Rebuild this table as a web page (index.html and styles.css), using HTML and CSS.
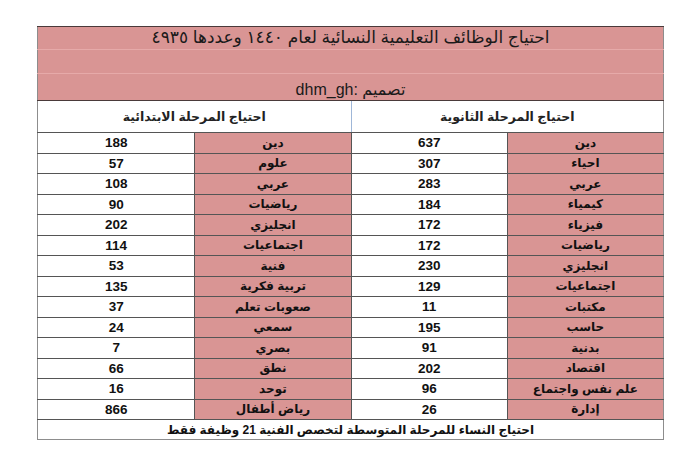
FILE: index.html
```html
<!DOCTYPE html>
<html lang="ar">
<head>
<meta charset="utf-8">
<link rel="stylesheet" href="styles.css">
</head>
<body>
<div class="sheet">
  <table class="grid" dir="rtl">
    <colgroup>
      <col class="c1"><col class="c2"><col class="c3"><col class="c4">
    </colgroup>
    <thead>
      <tr class="h-title"><th colspan="4">احتياج الوظائف التعليمية النسائية لعام ١٤٤٠ وعددها ٤٩٣٥</th></tr>
      <tr class="h-empty"><th colspan="4"></th></tr>
      <tr class="h-credit"><th colspan="4">تصميم :dhm_gh</th></tr>
      <tr class="h-sub">
        <th colspan="2" class="sub-right">احتياج المرحلة الثانوية</th>
        <th colspan="2" class="sub-left">احتياج المرحلة الابتدائية</th>
      </tr>
    </thead>
    <tbody>
      <tr><td class="subj">دين</td><td class="num">637</td><td class="subj">دين</td><td class="num">188</td></tr>
      <tr><td class="subj">احياء</td><td class="num">307</td><td class="subj">علوم</td><td class="num">57</td></tr>
      <tr><td class="subj">عربي</td><td class="num">283</td><td class="subj">عربي</td><td class="num">108</td></tr>
      <tr><td class="subj">كيمياء</td><td class="num">184</td><td class="subj">رياضيات</td><td class="num">90</td></tr>
      <tr><td class="subj">فيزياء</td><td class="num">172</td><td class="subj">انجليزي</td><td class="num">202</td></tr>
      <tr><td class="subj">رياضيات</td><td class="num">172</td><td class="subj">اجتماعيات</td><td class="num">114</td></tr>
      <tr><td class="subj">انجليزي</td><td class="num">230</td><td class="subj">فنية</td><td class="num">53</td></tr>
      <tr><td class="subj">اجتماعيات</td><td class="num">129</td><td class="subj">تربية فكرية</td><td class="num">135</td></tr>
      <tr><td class="subj">مكتبات</td><td class="num">11</td><td class="subj">صعوبات تعلم</td><td class="num">37</td></tr>
      <tr><td class="subj">حاسب</td><td class="num">195</td><td class="subj">سمعي</td><td class="num">24</td></tr>
      <tr><td class="subj">بدنية</td><td class="num">91</td><td class="subj">بصري</td><td class="num">7</td></tr>
      <tr><td class="subj">اقتصاد</td><td class="num">202</td><td class="subj">نطق</td><td class="num">66</td></tr>
      <tr><td class="subj">علم نفس واجتماع</td><td class="num">96</td><td class="subj">توحد</td><td class="num">16</td></tr>
      <tr><td class="subj">إدارة</td><td class="num">26</td><td class="subj">رياض أطفال</td><td class="num">866</td></tr>
    </tbody>
    <tfoot>
      <tr class="foot"><td colspan="4">احتياج النساء للمرحلة المتوسطة لتخصص الفنية 21 وظيفة فقط</td></tr>
    </tfoot>
  </table>
</div>
</body>
</html>
```
FILE: styles.css
```css
html, body {
  margin: 0;
  padding: 0;
  background: #ffffff;
}
body {
  font-family: "Liberation Sans", "DejaVu Sans", Arial, sans-serif;
  color: #111;
}
.sheet {
  padding: 26px 0 0 37px;
}
.grid {
  border-collapse: collapse;
  width: 627px;
  table-layout: fixed;
  border-left: 1px solid #8d8d8d;
  border-right: 1px solid #8d8d8d;
  border-bottom: 1px solid #8d8d8d;
}
.c1, .c2, .c3 { width: 156px; }
.c4 { width: 157px; }
.grid th, .grid td {
  padding: 0;
  text-align: center;
  overflow: hidden;
  white-space: nowrap;
}
.h-title th, .h-empty th, .h-credit th {
  background: #d99594;
  font-weight: normal;
  color: #1a1a1a;
}
.h-title th {
  height: 22px;
  font-size: 17px;
  line-height: 22px;
  border-top: 1px solid #4a3a3a;
  border-bottom: 1px solid #e6aaa9;
}
.h-empty th {
  height: 23px;
  border-bottom: 1px solid #e6aaa9;
}
.h-credit th {
  height: 25px;
  font-size: 16px;
  vertical-align: bottom;
  padding-bottom: 1px;
  border-bottom: 1px solid #4a3a3a;
}
.h-sub th {
  height: 31px;
  background: #fff;
  font-size: 12.5px;
  font-weight: bold;
  color: #222;
  border-bottom: 1px solid #555;
}
.sub-right {
  border-left: 1px solid #9fb7d8;
}
.grid tbody td {
  height: 19.5px;
  border: 1px solid #555;
  font-size: 13px;
  font-weight: bold;
  line-height: 1;
}
.grid tbody td.subj {
  background: #d99594;
  font-size: 12px;
}
.grid tbody td.num {
  background: #fff;
  font-size: 13.5px;
}
.grid tbody tr td:first-child { border-right-color: #8d8d8d; }
.grid tbody tr td:last-child { border-left-color: #8d8d8d; }
.foot td {
  height: 19px;
  font-size: 12px;
  font-weight: bold;
  border-top: 1px solid #555;
}
```
